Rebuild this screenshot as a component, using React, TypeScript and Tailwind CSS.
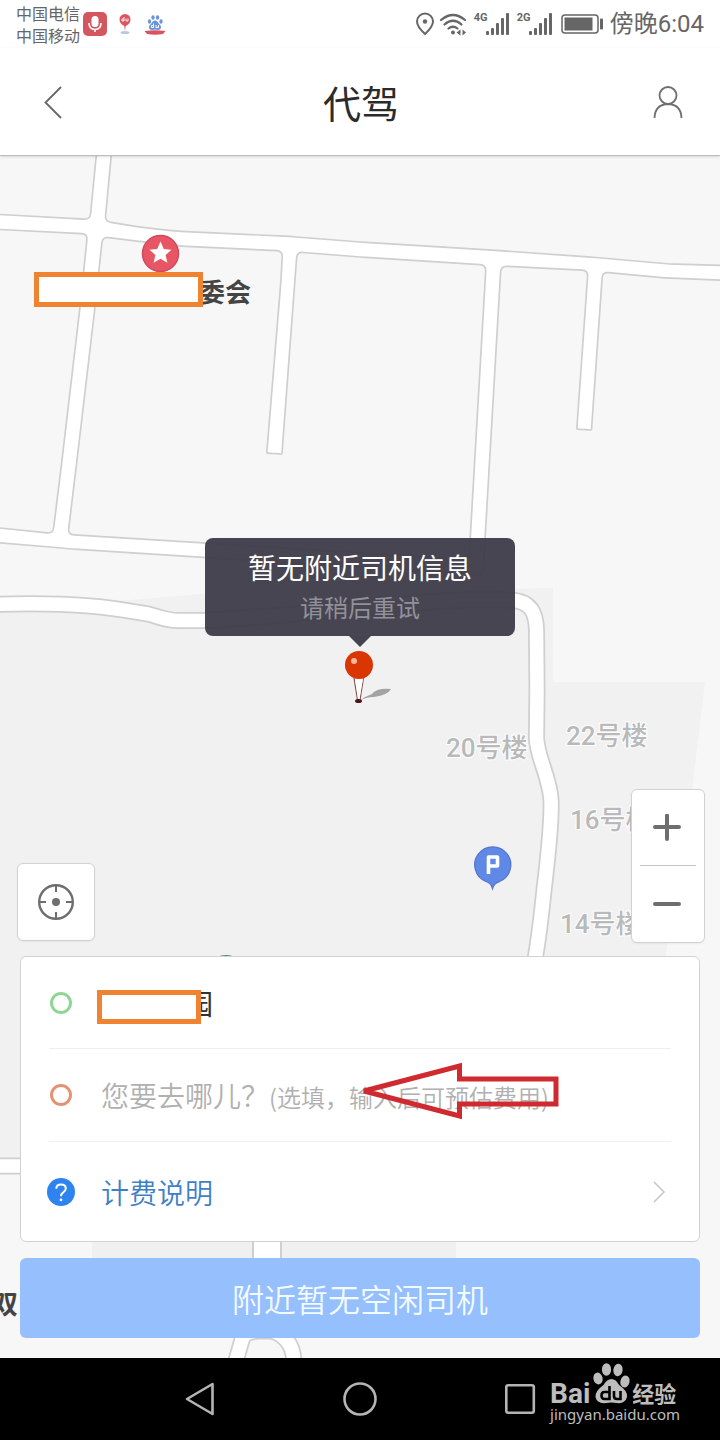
import React from "react";

type Point = [number, number];

function roundedPath(points: Point[], radius: number): string {
  const n = points.length;
  const parts = points.map((p, i) => {
    const prev = points[(i + n - 1) % n];
    const next = points[(i + 1) % n];
    const toward = (q: Point) => {
      const len = Math.hypot(q[0] - p[0], q[1] - p[1]);
      const k = Math.min(radius, len / 3) / len;
      return `${(p[0] + (q[0] - p[0]) * k).toFixed(1)} ${(p[1] + (q[1] - p[1]) * k).toFixed(1)}`;
    };
    return `${i === 0 ? "M" : "L"}${toward(prev)} Q${p[0]} ${p[1]} ${toward(next)}`;
  });
  return parts.join(" ") + " Z";
}

const blocks: Point[][] = [
  [[-10, 148], [97, 148], [90, 219.5], [-10, 214]],
  [[112, 148], [105, 221.5], [143, 227.5], [175, 231], [290, 236.5], [360, 242], [490, 250], [590, 257], [670, 264], [730, 265.5], [730, 148]],
  [[-10, 229], [87.5, 234], [80, 307], [62, 460], [53, 533.5], [-10, 527]],
  [[102.5, 237], [145, 242], [180, 246], [282.5, 251], [281, 280], [267, 450], [266.8, 453], [269, 453.2], [280, 454], [282, 454], [282.2, 451], [297, 252], [360, 257], [486, 265], [469, 560], [205, 543], [68, 534.5], [77, 460], [95, 307]],
  [[501, 266], [588, 270.5], [577, 426], [576.8, 429], [579, 429.2], [589, 430], [591.5, 430], [591.7, 427], [602.5, 272], [665, 278], [730, 280.5], [730, 1400], [-10, 1400], [-10, 542], [50, 547], [72, 549], [205, 557.5], [483, 575], [489, 470]],
];

const curvedRoad =
  "M-10 604.5 C30 603 65 604 90 606 C115 608 130 611 148 614 C160 617 166 620.5 178 620.5 L205 620.5 C300 616 400 601 480 599.5 L510 600 C532 601 536 614 536.5 630 L537 690 L536.5 738 C537 757 550 778 551 800 C552 820 547 865 544 890 Q540 930 535 960 L528 1040";
const loopRoad = "M235 1364 L242 1340 Q244 1332 258 1331 L272 1331 Q294 1338 294 1364";

function Road({ d }: { d: string }) {
  return (
    <>
      <path d={d} fill="none" stroke="#cfcfcf" strokeWidth="17" />
      <path d={d} fill="none" stroke="#fff" strokeWidth="13.5" />
    </>
  );
}

function MapCanvas() {
  return (
    <svg
      className="absolute inset-0 h-full w-full"
      viewBox="0 156 720 1202"
      preserveAspectRatio="xMidYMin slice"
      aria-label="地图"
    >
      <rect x="0" y="156" width="720" height="1202" fill="#fff" />
      {blocks.map((b, i) => (
        <path key={i} d={roundedPath(b, 6)} fill="#f7f7f7" stroke="#cfcfcf" strokeWidth="1.7" />
      ))}
      <path d="M-10 604 L130 600 L200 594 L553 588 V682 H705 L692 790 L665 960 L650 1160 H-10Z" fill="#f1f1f1" />
      <rect x="92" y="1200" width="364" height="136" fill="#f0f0f0" />
      <Road d={curvedRoad} />
      <Road d="M-10 1166 H100" />
      <path d="M267 1180 V1330" stroke="#cfcfcf" strokeWidth="30" />
      <path d="M267 1180 V1330" stroke="#fff" strokeWidth="26" />
      <Road d={loopRoad} />
      <ellipse cx="226" cy="961" rx="12" ry="6" fill="#54808c" />

      <g
        className="font-['Roboto','Noto_Sans_CJK_SC',sans-serif] text-[26px] font-medium"
        fill="#b9b9b9"
        stroke="#fff"
        strokeWidth="2"
        style={{ paintOrder: "stroke" }}
      >
        <text x="446" y="757">20号楼</text>
        <text x="566" y="745">22号楼</text>
        <text x="570" y="829">16号楼</text>
        <text x="560" y="933">14号楼</text>
      </g>
      <g className="font-['Noto_Sans_CJK_SC',sans-serif] text-[26px] font-bold" fill="#444">
        <text x="199" y="302">委会</text>
        <text x="-8" y="1314">双</text>
      </g>

      <circle cx="160.500" cy="253.500" r="18" fill="#e85565" stroke="#d04b5c" strokeWidth="1.500" />
      <path d="M160.5 241.500 L163.800 249 L171.500 249.800 L165.600 255 L167.400 262.800 L160.500 258.700 L153.600 262.800 L155.400 255 L149.500 249.800 L157.200 249Z" fill="#fff" />
      <rect x="36.500" y="274.500" width="164" height="30" fill="#fff" stroke="#f08331" strokeWidth="5" />

      <path d="M492.500 888.500 Q491 883 486 881.500 A18 18 0 1 1 499.500 881.500 Q494 883 492.500 888.500Z" fill="#6088e6" stroke="#5678cc" strokeWidth="1.300" />
      <path d="M488.500 874 V857 H497.500 V866 H489" fill="none" stroke="#fff" strokeWidth="3.600" strokeLinejoin="round" />
    </svg>
  );
}

function Signal({ label }: { label: string }) {
  return (
    <div className="flex h-6 items-start">
      <span className="w-3 font-['Roboto',sans-serif] text-[11px] leading-3 font-bold">{label}</span>
      <svg width="24" height="24" viewBox="0 0 24 24" fill="currentColor" aria-hidden="true">
        <rect x="0" y="19" width="3" height="4" rx="1" />
        <rect x="5" y="16" width="3" height="7" rx="1" />
        <rect x="10" y="11" width="3" height="12" rx="1" />
        <rect x="15" y="6" width="3" height="17" rx="1" />
        <rect x="20" y="1" width="3" height="22" rx="1" />
      </svg>
    </div>
  );
}

function StatusBar() {
  return (
    <div className="flex h-12 items-center justify-between px-4 text-[#666]">
      <div className="flex items-center">
        <p className="text-base leading-[22px]">
          中国电信
          <br />
          中国移动
        </p>
        <svg className="ml-[3px]" width="24" height="24" viewBox="0 0 24 24" aria-hidden="true">
          <rect width="24" height="24" rx="5" fill="#d4565f" />
          <rect x="8.500" y="4" width="7" height="11" rx="3.500" fill="#fff" />
          <path d="M6 11 Q6 17.500 12 17.500 Q18 17.500 18 11 M12 17.500 V20" fill="none" stroke="#fff" strokeWidth="1.600" />
        </svg>
        <svg className="ml-3" width="12" height="22" viewBox="0 0 12 22" aria-hidden="true">
          <ellipse cx="6" cy="19.500" rx="4.500" ry="1.500" fill="#b9c6e6" />
          <path d="M6 18 L5.300 13 Q0.500 10.500 0.500 6.500 A5.500 5.500 0 0 1 11.500 6.500 Q11.500 10.500 6.700 13Z" fill="#dc5560" />
          <path d="M5 4 V8 H3 V6 H5 M7 5.500 V8 H9 V5.500" fill="none" stroke="#fff" strokeWidth="0.900" />
        </svg>
        <svg className="ml-3" width="24" height="24" viewBox="0 0 24 24" aria-hidden="true">
          <g fill="#6b93dd">
            <ellipse cx="6.500" cy="9.500" rx="1.600" ry="2.200" />
            <ellipse cx="10" cy="5.500" rx="1.700" ry="2.300" />
            <ellipse cx="14.500" cy="5.500" rx="1.700" ry="2.300" />
            <ellipse cx="18" cy="9.500" rx="1.600" ry="2.200" />
            <path d="M12 8.500 Q14.500 8.500 16 12 Q19 14 17.500 17 Q16 18.500 12 17.500 Q8 18.500 6.500 17 Q5 14 8 12 Q9.500 8.500 12 8.500Z" />
          </g>
          <path d="M10.500 11.500 V15.500 H8.500 V13.500 H10.500 M13 13 V15.500 H15.500 V13" fill="none" stroke="#fff" />
          <path d="M1.500 19 Q12 17.500 22.500 19 L20 22 Q12 23.500 4 22Z" fill="#d9535f" />
        </svg>
      </div>
      <div className="flex items-center">
        <svg width="20" height="24" viewBox="0 0 20 24" fill="none" stroke="currentColor" strokeWidth="2" aria-hidden="true">
          <path d="M10 22 Q2 14.500 2 9.500 A8 8 0 0 1 18 9.500 Q18 14.500 10 22Z" />
          <circle cx="10" cy="9.500" r="2.200" fill="currentColor" stroke="none" />
        </svg>
        <svg className="ml-1" width="28" height="24" viewBox="0 0 28 24" fill="none" stroke="currentColor" strokeWidth="2.200" strokeLinecap="round" aria-hidden="true">
          <path d="M2 8 Q14 -2 26 8 M5.500 12.500 Q14 5 22.500 12.500 M9.500 16.500 Q14 13 18.500 16.500" />
          <circle cx="14" cy="20.500" r="2" fill="currentColor" stroke="none" />
          <path d="M17.500 20.500 L21.500 17.500 V23.500Z M27 20.500 L23.500 17.500 V23.500Z" fill="currentColor" stroke="none" />
        </svg>
        <div className="ml-[7px] flex gap-[7px]">
          <Signal label="4G" />
          <Signal label="2G" />
        </div>
        <svg className="ml-2" width="42" height="20" viewBox="0 0 42 20" aria-hidden="true">
          <rect x="1" y="1" width="36" height="18" rx="3" fill="none" stroke="currentColor" strokeWidth="1.500" />
          <rect x="3.500" y="3.500" width="28" height="13" fill="currentColor" />
          <rect x="39" y="4.500" width="3" height="11" rx="1" fill="currentColor" />
        </svg>
        <span className="ml-[7px] font-['Roboto','Noto_Sans_CJK_SC',sans-serif] text-2xl leading-8">傍晚6:04</span>
      </div>
    </div>
  );
}

function MapBubble() {
  return (
    <div className="relative mt-[382px] flex flex-col items-center self-center">
      <div className="w-[310px] rounded-lg bg-[#3d3b48]/95 py-[9px] text-center">
        <p className="text-[28px] leading-10 text-white">暂无附近司机信息</p>
        <p className="text-2xl leading-10 text-[#92919a]">请稍后重试</p>
      </div>
      <svg width="80" height="70" viewBox="0 0 80 70" aria-hidden="true">
        <path d="M29 0 H51 L40 11Z" fill="#45434f" />
        <path d="M39 65 Q46 60 52 58 Q56 52 71 53 Q68 59 54 61 Q46 61 39 65Z" fill="#a3a3a3" />
        <path d="M34 42 L37.500 64 M43.500 42 L40 64" stroke="#8d5148" strokeWidth="1.200" />
        <path d="M35 43 L38 63 H39.500 L43 43Z" fill="#fff" />
        <ellipse cx="38.500" cy="65" rx="3.500" ry="2" fill="#4a1418" />
        <circle cx="39" cy="29" r="14" fill="#d93603" />
        <circle cx="34" cy="25" r="3" fill="#f6b8a0" />
      </svg>
    </div>
  );
}

function MapControls() {
  return (
    <div className="relative mt-auto mb-[13px] flex items-end justify-between pr-[15px] pl-[17px]">
      <button
        type="button"
        aria-label="定位"
        className="mb-0.5 flex size-[78px] items-center justify-center rounded-md border border-[#d2d2d2] bg-white text-[#6e6e6e] shadow-xs"
      >
        <svg width="38" height="38" viewBox="0 0 38 38" fill="none" stroke="currentColor" strokeWidth="2.400" aria-hidden="true">
          <circle cx="19" cy="19" r="16.800" />
          <path d="M19 3 V9 M19 29 V35 M3 19 H9 M29 19 H35" strokeWidth="2" />
          <circle cx="19" cy="19" r="4" fill="currentColor" stroke="none" />
        </svg>
      </button>
      <div className="flex w-[74px] flex-col rounded-md border border-[#d2d2d2] bg-white px-2 text-[#6e6e6e] shadow-xs">
        <button type="button" aria-label="放大" className="flex h-[76px] items-center justify-center border-b border-[#c4c4c4]">
          <svg width="30" height="28" viewBox="0 0 30 28" stroke="currentColor" strokeWidth="4" strokeLinecap="round" aria-hidden="true">
            <path d="M2 13 H26 M14 1.500 V25" />
          </svg>
        </button>
        <button type="button" aria-label="缩小" className="flex h-[76px] items-center justify-center">
          <svg width="30" height="28" viewBox="0 0 30 28" stroke="currentColor" strokeWidth="4" strokeLinecap="round" aria-hidden="true">
            <path d="M2 14 H26" />
          </svg>
        </button>
      </div>
    </div>
  );
}

function TripCard() {
  return (
    <section className="relative mx-5 rounded-md border border-[#d2d2d2] bg-white px-7">
      <button type="button" className="flex h-[92px] w-full items-center gap-6 border-b border-[#efefef] text-left">
        <span className="flex w-6 justify-center">
          <span className="size-[22px] rounded-full border-3 border-[#8fd695]" />
        </span>
        <span className="flex items-center">
          <span className="relative z-10 mt-2 h-[34px] w-[104px] border-5 border-[#f08331] bg-white" />
          <span className="-ml-4 text-[28px] leading-8 text-[#333]">园</span>
        </span>
      </button>
      <label className="flex h-[93px] items-center gap-7 border-b border-[#efefef]">
        <span className="flex w-6 shrink-0 justify-center">
          <span className="size-[22px] rounded-full border-3 border-[#e59272]" />
        </span>
        <span className="grid flex-1 items-center">
          <input
            type="text"
            placeholder=" "
            aria-label="您要去哪儿？(选填，输入后可预估费用)"
            className="peer col-start-1 row-start-1 h-12 w-full bg-transparent text-[28px] text-[#333] outline-none"
          />
          <span className="pointer-events-none col-start-1 row-start-1 text-[28px] leading-10 font-[350] whitespace-nowrap text-[#b0b0b0] peer-[:not(:placeholder-shown)]:hidden">
            您要去哪儿？<span className="text-2xl">(选填，输入后可预估费用)</span>
          </span>
        </span>
      </label>
      <a href="#pricing" className="flex h-[99px] items-center gap-7">
        <span className="flex w-6 justify-center">
          <svg className="shrink-0" width="28" height="28" viewBox="0 0 28 28" fill="none" aria-hidden="true">
            <circle cx="14" cy="14" r="14" fill="#2f83f0" />
            <path d="M9.300 10.800 Q9.300 6.500 14 6.500 Q18.800 6.500 18.800 10.500 Q18.800 12.800 16.200 14.300 Q14 15.800 14 18.300" stroke="#fff" strokeWidth="2" />
            <circle cx="14" cy="21.800" r="1.400" fill="#fff" />
          </svg>
        </span>
        <span className="flex-1 text-[28px] leading-10 font-[350] text-[#3f7fc6]">计费说明</span>
        <svg width="18" height="24" viewBox="0 0 18 24" fill="none" stroke="#c8c8c8" strokeWidth="1.600" aria-hidden="true">
          <path d="M1 2 L11 12 L1 22" />
        </svg>
      </a>
      <svg className="pointer-events-none absolute top-[105px] left-[339px]" width="200" height="58" viewBox="0 0 200 58" fill="none" aria-hidden="true">
        <path d="M4 29 L99.500 4 V17 H196 V42 H99.500 V54 Z" stroke="#cf2a30" strokeWidth="5" strokeLinejoin="miter" strokeMiterlimit="2" />
      </svg>
    </section>
  );
}

function Watermark() {
  return (
    <div className="absolute top-0 right-10 flex flex-col items-start text-[#bdbdbd]">
      <div className="mt-1 flex h-[42px] items-end">
        <span className="font-['Roboto',sans-serif] text-[28px] leading-5 font-bold">Bai</span>
        <svg className="mx-px" width="40" height="42" viewBox="0 0 40 42" fill="currentColor" aria-hidden="true">
          <ellipse cx="7" cy="16.500" rx="4.600" ry="6" transform="rotate(-12 7 16.500)" />
          <ellipse cx="15.500" cy="7.500" rx="4.600" ry="6.200" />
          <ellipse cx="27" cy="8" rx="4.600" ry="6.200" transform="rotate(8 27 8)" />
          <ellipse cx="34" cy="19.500" rx="4.600" ry="6" transform="rotate(14 34 19.500)" />
          <path d="M20.500 17 Q25 17 28 23 Q37 29 36 35 Q34 42 26 41 Q20.500 40 15 41 Q6 42 4.500 35 Q4 29 12.500 23 Q16 17 20.500 17Z" />
          <path d="M18.500 24 V37 H13.500 Q10.500 37 10.500 33.500 Q10.500 30 13.500 30 H18.500 M23 29 V34 Q23 37 26 37 H29.500 V29" fill="none" stroke="#000" strokeWidth="2.600" />
        </svg>
        <span className="text-[22px] leading-6 font-bold">经验</span>
      </div>
      <span className="font-['Noto_Sans',sans-serif] text-[15px] leading-5">jingyan.baidu.com</span>
    </div>
  );
}

function NavBar() {
  const key = "flex size-10 items-center justify-center";
  return (
    <nav className="relative flex h-[82px] items-center justify-center gap-[120px] bg-black text-[#b4b4b4]">
      <button type="button" aria-label="返回键" className={key}>
        <svg width="32" height="36" viewBox="0 0 32 36" fill="none" stroke="currentColor" strokeWidth="2.600" strokeLinejoin="round" aria-hidden="true">
          <path d="M3 18 L28.500 3 V33Z" />
        </svg>
      </button>
      <button type="button" aria-label="主屏幕" className={key}>
        <svg width="34" height="34" viewBox="0 0 34 34" fill="none" stroke="currentColor" strokeWidth="2.600" aria-hidden="true">
          <circle cx="17" cy="17" r="15.500" />
        </svg>
      </button>
      <button type="button" aria-label="最近任务" className={key}>
        <svg width="32" height="32" viewBox="0 0 32 32" fill="none" stroke="currentColor" strokeWidth="2.600" aria-hidden="true">
          <rect x="2.300" y="2.300" width="27.500" height="27.500" rx="2" />
        </svg>
      </button>
      <Watermark />
    </nav>
  );
}

export default function App() {
  return (
    <div className="flex min-h-screen flex-col overflow-hidden bg-white font-['Noto_Sans_CJK_SC',sans-serif]">
      <StatusBar />
      <header className="relative z-10 flex h-[108px] items-center justify-between border-b border-[#bdbdbd] bg-white pr-[34px] pl-9 shadow-sm">
        <button type="button" aria-label="返回" className="flex size-9 items-center justify-center">
          <svg width="20" height="36" viewBox="0 0 20 36" fill="none" stroke="#666" strokeWidth="1.800" aria-hidden="true">
            <path d="M17 3 L1.500 18.500 L17 34" />
          </svg>
        </button>
        <h1 className="text-[38px] leading-[56px] text-[#2b2b2b]">代驾</h1>
        <button type="button" aria-label="个人中心" className="flex size-9 items-center justify-center">
          <svg width="32" height="34" viewBox="0 0 32 34" fill="none" stroke="#6e6e6e" strokeWidth="1.800" aria-hidden="true">
            <circle cx="16" cy="10.500" r="8.500" />
            <path d="M2.500 33 Q3 19.500 16 19 Q29 19.500 29.500 33" />
          </svg>
        </button>
      </header>
      <main className="relative flex flex-1 flex-col">
        <MapCanvas />
        <MapBubble />
        <MapControls />
        <TripCard />
        <button type="button" className="relative mx-5 mt-4 mb-5 h-20 rounded-md bg-[#96bffd] text-[32px] leading-10 font-[350] text-[#f2fbff]">
          附近暂无空闲司机
        </button>
      </main>
      <NavBar />
    </div>
  );
}
